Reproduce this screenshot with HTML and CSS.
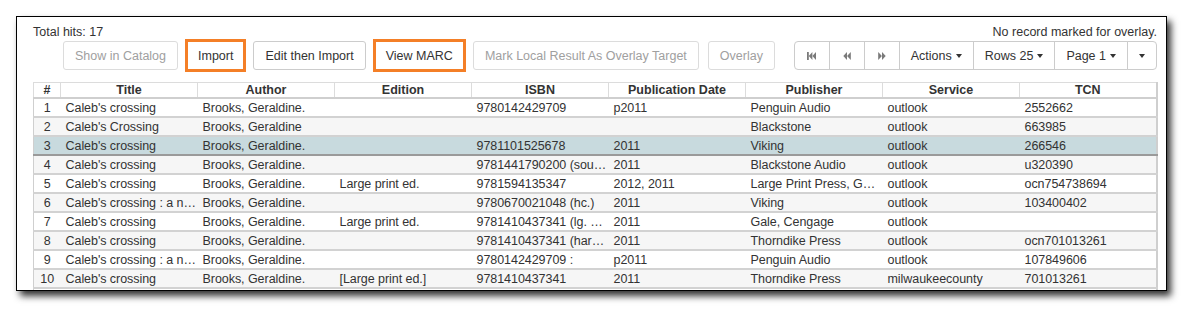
FILE: index.html
```html
<!DOCTYPE html>
<html lang="en">
<head>
<meta charset="utf-8">
<title>Z39.50 results</title>
<link rel="stylesheet" href="styles.css">
</head>
<body>
<div class="frame">
  <div class="topline">
    <span>Total hits: 17</span>
    <span>No record marked for overlay.</span>
  </div>
  <div class="toolbar">
    <div class="actions">
      <button class="btn" disabled>Show in Catalog</button>
      <button class="btn hl">Import</button>
      <button class="btn">Edit then Import</button>
      <button class="btn hl">View MARC</button>
      <button class="btn" disabled>Mark Local Result As Overlay Target</button>
      <button class="btn" disabled>Overlay</button>
    </div>
    <div class="pager">
      <button class="seg icon" aria-label="First page">
        <svg width="9" height="8" viewBox="0 0 9 8"><rect x="0" y="0" width="1.8" height="8" fill="currentColor"/><polygon points="5.4,0 1.8,4 5.4,8" fill="currentColor"/><polygon points="9,0 5.4,4 9,8" fill="currentColor"/></svg>
      </button>
      <button class="seg icon" aria-label="Previous page">
        <svg width="8" height="8" viewBox="0 0 8 8"><polygon points="4,0 0.3,4 4,8" fill="currentColor"/><polygon points="7.8,0 4.1,4 7.8,8" fill="currentColor"/></svg>
      </button>
      <button class="seg icon" aria-label="Next page">
        <svg width="8" height="8" viewBox="0 0 8 8"><polygon points="0.2,0 3.9,4 0.2,8" fill="currentColor"/><polygon points="4,0 7.7,4 4,8" fill="currentColor"/></svg>
      </button>
      <button class="seg">Actions<span class="caret"></span></button>
      <button class="seg">Rows 25<span class="caret"></span></button>
      <button class="seg">Page 1<span class="caret"></span></button>
      <button class="seg only-caret"><span class="caret"></span></button>
    </div>
  </div>
  <table class="grid">
    <colgroup>
      <col class="c-num">
      <col class="c-std"><col class="c-std"><col class="c-std"><col class="c-std">
      <col class="c-std"><col class="c-std"><col class="c-std"><col class="c-std">
    </colgroup>
    <thead>
      <tr>
        <th>#</th><th>Title</th><th>Author</th><th>Edition</th><th>ISBN</th><th>Publication Date</th><th>Publisher</th><th>Service</th><th>TCN</th>
      </tr>
    </thead>
    <tbody>
      <tr><td class="num">1</td><td>Caleb's crossing</td><td>Brooks, Geraldine.</td><td></td><td>9780142429709</td><td>p2011</td><td>Penguin Audio</td><td>outlook</td><td>2552662</td></tr>
      <tr class="alt"><td class="num">2</td><td>Caleb's Crossing</td><td>Brooks, Geraldine</td><td></td><td></td><td></td><td>Blackstone</td><td>outlook</td><td>663985</td></tr>
      <tr class="sel"><td class="num">3</td><td>Caleb's crossing</td><td>Brooks, Geraldine.</td><td></td><td>9781101525678</td><td>2011</td><td>Viking</td><td>outlook</td><td>266546</td></tr>
      <tr class="alt"><td class="num">4</td><td>Caleb's crossing</td><td>Brooks, Geraldine.</td><td></td><td>9781441790200 (sound recording)</td><td>2011</td><td>Blackstone Audio</td><td>outlook</td><td>u320390</td></tr>
      <tr><td class="num">5</td><td>Caleb's crossing</td><td>Brooks, Geraldine.</td><td>Large print ed.</td><td>9781594135347</td><td>2012, 2011</td><td>Large Print Press, Gale Cengage</td><td>outlook</td><td>ocn754738694</td></tr>
      <tr class="alt"><td class="num">6</td><td>Caleb's crossing : a novel</td><td>Brooks, Geraldine.</td><td></td><td>9780670021048 (hc.)</td><td>2011</td><td>Viking</td><td>outlook</td><td>103400402</td></tr>
      <tr><td class="num">7</td><td>Caleb's crossing</td><td>Brooks, Geraldine.</td><td>Large print ed.</td><td>9781410437341 (lg. print)</td><td>2011</td><td>Gale, Cengage</td><td>outlook</td><td></td></tr>
      <tr class="alt"><td class="num">8</td><td>Caleb's crossing</td><td>Brooks, Geraldine.</td><td></td><td>9781410437341 (hardcover)</td><td>2011</td><td>Thorndike Press</td><td>outlook</td><td>ocn701013261</td></tr>
      <tr><td class="num">9</td><td>Caleb's crossing : a novel</td><td>Brooks, Geraldine.</td><td></td><td>9780142429709 :</td><td>p2011</td><td>Penguin Audio</td><td>outlook</td><td>107849606</td></tr>
      <tr class="alt"><td class="num">10</td><td>Caleb's crossing</td><td>Brooks, Geraldine.</td><td>[Large print ed.]</td><td>9781410437341</td><td>2011</td><td>Thorndike Press</td><td>milwaukeecounty</td><td>701013261</td></tr>
      <tr><td class="num">11</td><td>Caleb's crossing</td><td>Brooks, Geraldine.</td><td></td><td></td><td>2011</td><td>Viking</td><td>milwaukeecounty</td><td></td></tr>
    </tbody>
  </table>
</div>
</body>
</html>
```

FILE: styles.css
```css
* { box-sizing: border-box; }

html, body {
  margin: 0;
  background: #fff;
}

body {
  padding: 16px;
  font-family: "Liberation Sans", Arial, sans-serif;
  font-size: 12.5px;
  color: #333;
}

.frame {
  width: 1151px;
  height: 275px;
  border: 1px solid #000;
  background: #fff;
  padding: 8px 9px 0 16px;
  overflow: hidden;
  box-shadow: 4px 5px 7px rgba(0, 0, 0, 0.8);
}

.topline {
  display: flex;
  justify-content: space-between;
  line-height: 14px;
  color: #333;
}

.toolbar {
  display: flex;
  align-items: center;
  margin-top: 2px;
  padding-left: 30px;
}

.actions {
  display: flex;
  gap: 9px;
}

.btn, .seg {
  height: 29px;
  font-family: inherit;
  font-size: 12.5px;
  color: #333;
  background: #fff;
  border: 1px solid #ccc;
  border-radius: 3px;
  padding: 0 11px;
  margin: 0;
  display: inline-flex;
  align-items: center;
  justify-content: center;
  white-space: nowrap;
}

.btn[disabled] {
  color: #a0a0a0;
  border-color: #dcdcdc;
}

.btn.hl {
  padding: 0 10px;
  border-radius: 0;
  border-color: #f47f27;
  outline: 2px solid #f47f27;
}

.pager {
  display: flex;
  margin-left: auto;
}

.seg {
  border-radius: 0;
  margin-left: -1px;
}

.seg:first-child {
  margin-left: 0;
  border-radius: 4px 0 0 4px;
}

.seg:last-child {
  border-radius: 0 4px 4px 0;
}

.seg.icon {
  width: 36px;
  padding: 0;
  color: #7a7a7a;
}

.seg.icon svg {
  display: block;
}

.seg.only-caret {
  width: 30px;
  padding: 0;
}

.caret {
  display: inline-block;
  width: 0;
  height: 0;
  margin-left: 4px;
  border-top: 4px solid #333;
  border-left: 3.5px solid transparent;
  border-right: 3.5px solid transparent;
}

.only-caret .caret {
  margin-left: 0;
}

.grid {
  margin-top: 12px;
  width: 1124px;
  table-layout: fixed;
  border-collapse: collapse;
  border-left: 1px solid #cfcfcf;
  border-right: 2px solid #cfcfcf;
}

.c-num { width: 27px; }
.c-std { width: 137px; }

.grid th {
  height: 14px;
  line-height: 14px;
  padding: 0 5px;
  font-weight: bold;
  text-align: center;
  color: #333;
  border: 1px solid #dcdcdc;
  border-bottom: 2px solid #cfcfcf;
  white-space: nowrap;
  overflow: hidden;
}

.grid td {
  height: 15px;
  line-height: 15px;
  padding: 2px 1px 0 5px;
  letter-spacing: -0.05px;
  border-bottom: 2px solid #d2d2d2;
  white-space: nowrap;
  overflow: hidden;
  text-overflow: ellipsis;
}

.grid td.num {
  padding: 2px 0 0;
  text-align: center;
}

.grid tr.alt td {
  background: #f6f6f6;
}

.grid tr.sel td {
  background: #c8dade;
  border-bottom-color: #9a9a9a;
}
```
